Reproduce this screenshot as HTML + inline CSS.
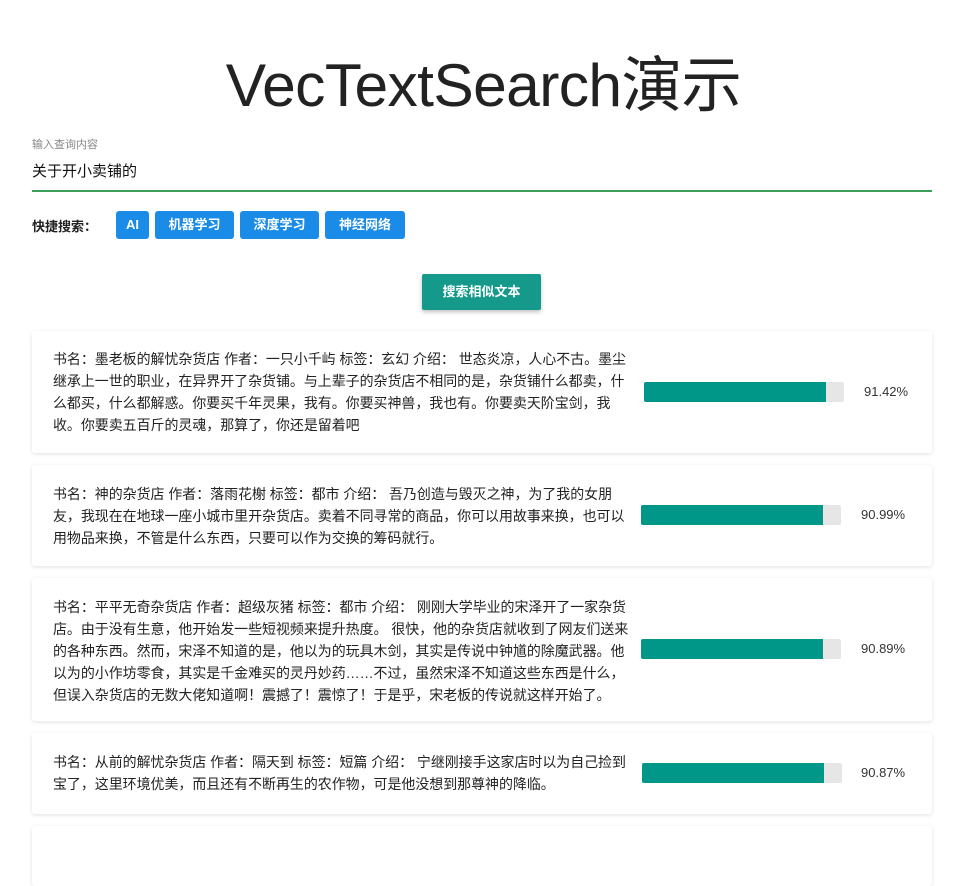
<!DOCTYPE html>
<html><head><meta charset="utf-8"><style>
*{margin:0;padding:0;box-sizing:border-box}
body{width:967px;height:830px;overflow:hidden;background:#fff;font-family:"Liberation Sans","Noto Sans CJK SC",sans-serif;color:#222;position:relative}
h1{position:absolute;left:0;right:0;top:37px;text-align:center;font-size:60.5px;font-weight:400;color:#222;letter-spacing:-0.6px}
.lbl{position:absolute;left:32px;top:136px;font-size:11px;color:#888}
.val{position:absolute;left:32px;top:160px;font-size:15px;color:#111}
.line{position:absolute;left:32px;top:190px;width:900px;height:2px;background:#3d9e57}
.qs{position:absolute;left:32px;top:216px;font-size:13px;font-weight:bold;color:#222}
.chip{position:absolute;top:211px;height:28px;background:#1a8be6;color:#fff;border-radius:3px;font-size:13px;font-weight:bold;text-align:center;line-height:28px}
.btn{position:absolute;left:422px;top:274px;width:119px;height:36px;background:#14998a;color:#fff;font-size:13px;font-weight:bold;text-align:center;line-height:36px;border-radius:2px;box-shadow:0 2px 4px rgba(0,0,0,.25)}
.card{position:absolute;left:32px;width:900px;background:#fff;box-shadow:0 1px 4px rgba(0,0,0,.12);border-radius:3px}
.t{position:absolute;left:21px;font-size:13.95px;line-height:22px;color:#222;white-space:nowrap}
.bar{position:absolute;height:20px;width:200px;background:#e6e6e6;border-radius:2px;overflow:hidden}
.bar i{display:block;height:100%;background:#009688}
.p{position:absolute;font-size:13px;color:#333}
</style></head><body>
<h1>VecTextSearch演示</h1>
<div class="lbl">输入查询内容</div>
<div class="val">关于开小卖铺的</div>
<div class="line"></div>
<div class="qs">快捷搜索：</div>
<div class="chip" style="left:116px;width:33px">AI</div>
<div class="chip" style="left:155px;width:79px">机器学习</div>
<div class="chip" style="left:240px;width:79px">深度学习</div>
<div class="chip" style="left:325px;width:80px">神经网络</div>
<div class="btn">搜索相似文本</div>

<div class="card" style="top:331px;height:122px">
<div class="t" style="top:17px">书名：墨老板的解忧杂货店 作者：一只小千屿 标签：玄幻 介绍： 世态炎凉，人心不古。墨尘<br>继承上一世的职业，在异界开了杂货铺。与上辈子的杂货店不相同的是，杂货铺什么都卖，什<br>么都买，什么都解惑。你要买千年灵果，我有。你要买神兽，我也有。你要卖天阶宝剑，我<br>收。你要卖五百斤的灵魂，那算了，你还是留着吧</div>
<div class="bar" style="left:612px;top:51px"><i style="width:182px"></i></div>
<div class="p" style="left:832px;top:53px">91.42%</div></div>

<div class="card" style="top:465px;height:101px">
<div class="t" style="top:18px">书名：神的杂货店 作者：落雨花榭 标签：都市 介绍： 吾乃创造与毁灭之神，为了我的女朋<br>友，我现在在地球一座小城市里开杂货店。卖着不同寻常的商品，你可以用故事来换，也可以<br>用物品来换，不管是什么东西，只要可以作为交换的筹码就行。</div>
<div class="bar" style="left:609px;top:40px"><i style="width:182px"></i></div>
<div class="p" style="left:829px;top:42px">90.99%</div></div>

<div class="card" style="top:578px;height:143px">
<div class="t" style="top:18px">书名：平平无奇杂货店 作者：超级灰猪 标签：都市 介绍： 刚刚大学毕业的宋泽开了一家杂货<br>店。由于没有生意，他开始发一些短视频来提升热度。 很快，他的杂货店就收到了网友们送来<br>的各种东西。然而，宋泽不知道的是，他以为的玩具木剑，其实是传说中钟馗的除魔武器。他<br>以为的小作坊零食，其实是千金难买的灵丹妙药……不过，虽然宋泽不知道这些东西是什么，<br>但误入杂货店的无数大佬知道啊！震撼了！震惊了！于是乎，宋老板的传说就这样开始了。</div>
<div class="bar" style="left:609px;top:61px"><i style="width:182px"></i></div>
<div class="p" style="left:829px;top:63px">90.89%</div></div>

<div class="card" style="top:733px;height:81px">
<div class="t" style="top:18px">书名：从前的解忧杂货店 作者：隔天到 标签：短篇 介绍： 宁继刚接手这家店时以为自己捡到<br>宝了，这里环境优美，而且还有不断再生的农作物，可是他没想到那尊神的降临。</div>
<div class="bar" style="left:610px;top:30px"><i style="width:182px"></i></div>
<div class="p" style="left:829px;top:32px">90.87%</div></div>

<div class="card" style="top:826px;height:60px"></div>
</body></html>
